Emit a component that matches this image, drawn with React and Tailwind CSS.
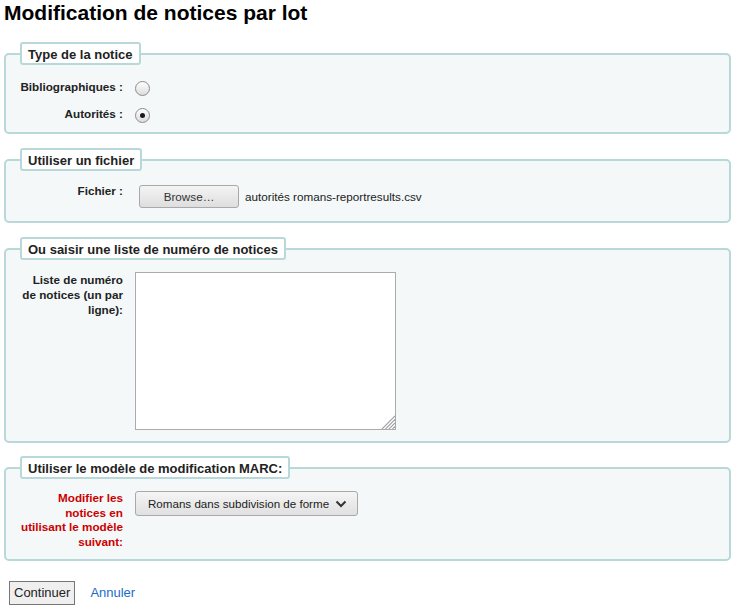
import React from 'react';

const font = "font-['Liberation_Sans',Arial,sans-serif]";

const Radio = ({ checked }) => (
  <span className="mt-[2px] w-[15px] h-[15px] shrink-0 rounded-full border border-[#8c8c8c] bg-linear-to-b from-white to-[#dcdcdc] flex items-center justify-center">
    {checked && <span className="w-[5px] h-[5px] rounded-full bg-[#1a1a1a]" />}
  </span>
);

const Fieldset = ({ legend, className = '', children }) => (
  <fieldset className={`border-2 border-[#b9d8d9] rounded-[5px] bg-[#f4f8f9] ${className}`}>
    <legend className="ml-[14px] border-2 border-[#b9d8d9] rounded-[3px] bg-white px-[6px] pt-[3px] pb-0 text-[13px] leading-[16px] font-bold text-[#222]">
      {legend}
    </legend>
    <div className="pl-[9px]">{children}</div>
  </fieldset>
);

const Label = ({ children, red }) => (
  <div className={`w-[108px] mr-[12px] shrink-0 text-right text-[11.7px] font-bold ${red ? 'text-[#cc0000] leading-[14.5px]' : 'text-[#222] leading-[15px]'}`}>
    {children}
  </div>
);

export default function App() {
  return (
    <div className={`${font} min-h-[610px] bg-white text-[#222] pl-[4px] pr-[6px]`}>
      <h1 className="pt-[1px] mb-[17px] text-[21px] leading-[24px] font-bold text-black">
        Modification de notices par lot
      </h1>

      <Fieldset legend="Type de la notice" className="mb-[14px]">
        <div className="pt-[14px] pb-[9px] flex flex-col gap-[10px]">
          <div className="flex items-start h-[17px]">
            <Label>Bibliographiques :</Label>
            <Radio />
          </div>
          <div className="flex items-start h-[17px]">
            <Label>Autorités :</Label>
            <Radio checked />
          </div>
        </div>
      </Fieldset>

      <Fieldset legend="Utiliser un fichier" className="mb-[14px]">
        <div className="pt-[12px] pb-[13px] flex items-start">
          <Label>Fichier :</Label>
          <div className="mt-[2px] ml-[4px] flex items-center">
            <button className="w-[100px] h-[23px] border border-[#a9a9a9] rounded-[3px] bg-linear-to-b from-[#f4f4f4] to-[#dedede] text-[11.7px] text-[#333]">
              Browse…
            </button>
            <span className="ml-[6px] text-[11.7px] text-[#222]">autorités romans-reportresults.csv</span>
          </div>
        </div>
      </Fieldset>

      <Fieldset legend="Ou saisir une liste de numéro de notices" className="mb-[13px]">
        <div className="pt-[12px] pb-[11px] flex items-start">
          <Label>
            Liste de numéro
            <br />
            de notices (un par
            <br />
            ligne):
          </Label>
          <div className="relative w-[261px] h-[158px]">
            <textarea className="block w-full h-full resize-none border border-[#ababab] bg-white outline-none" />
            <svg className="absolute right-[1px] bottom-[1px]" width="14" height="14" viewBox="0 0 14 14">
              <g stroke="#a0a0a0" strokeWidth="1.1">
                <line x1="14" y1="1" x2="1" y2="14" />
                <line x1="14" y1="4.5" x2="4.5" y2="14" />
                <line x1="14" y1="8" x2="8" y2="14" />
                <line x1="14" y1="11.5" x2="11.5" y2="14" />
              </g>
            </svg>
          </div>
        </div>
      </Fieldset>

      <Fieldset legend="Utiliser le modèle de modification MARC:" className="mb-[20px]">
        <div className="pt-[12px] pb-[10px] flex items-start">
          <Label red>
            Modifier les
            <br />
            notices en
            <br />
            utilisant le modèle
            <br />
            suivant:
          </Label>
          <div className="w-[223px] h-[25px] flex items-center justify-between border border-[#a9a9a9] rounded-[3px] bg-linear-to-b from-[#f5f5f5] to-[#e0e0e0] pl-[12px] pr-[10px]">
            <span className="text-[11.6px] text-[#222] whitespace-nowrap">Romans dans subdivision de forme</span>
            <svg width="12" height="8" viewBox="0 0 12 8">
              <polyline points="1.5,1.5 6,6 10.5,1.5" fill="none" stroke="#333" strokeWidth="2" />
            </svg>
          </div>
        </div>
      </Fieldset>

      <div className="flex items-center pl-[5px]">
        <button className="h-[24px] px-[4px] border border-[#767676] bg-[#efefef] text-[13px] text-[#222]">
          Continuer
        </button>
        <a href="#" className="ml-[15px] text-[13px] text-[#1a6bcc]">
          Annuler
        </a>
      </div>
    </div>
  );
}
